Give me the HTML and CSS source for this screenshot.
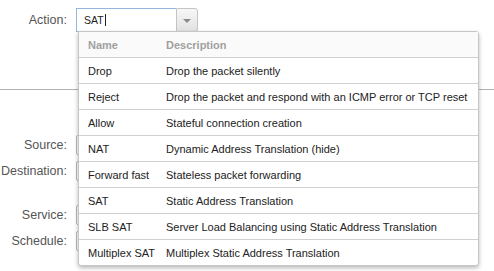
FILE: index.html
```html
<!DOCTYPE html>
<html>
<head>
<meta charset="utf-8" />
<title>Rule action</title>
<link rel="stylesheet" href="styles.css">
</head>
<body>
<div class="top">
    <div class="row">
        <label class="lbl">Action:</label>
        <div class="combo">
            <div class="combo-input">SAT<span class="caret"></span></div>
            <div class="combo-btn"><span class="arrow"></span></div>

            <!-- action list -->
            <div class="list">
                <div class="item head"><span>Name</span><span>Description</span></div>
                <div class="item"><span>Drop</span><span>Drop the packet silently</span></div>
                <div class="item"><span>Reject</span><span>Drop the packet and respond with an ICMP error or TCP reset</span></div>
                <div class="item"><span>Allow</span><span>Stateful connection creation</span></div>
                <div class="item"><span>NAT</span><span>Dynamic Address Translation (hide)</span></div>
                <div class="item"><span>Forward fast</span><span>Stateless packet forwarding</span></div>
                <div class="item"><span>SAT</span><span>Static Address Translation</span></div>
                <div class="item"><span>SLB SAT</span><span>Server Load Balancing using Static Address Translation</span></div>
                <div class="item"><span>Multiplex SAT</span><span>Multiplex Static Address Translation</span></div>
            </div>
        </div>
    </div>
</div>

<div class="sep"></div>

<div class="fields">
    <div class="row"><label class="lbl">Source:</label><div class="field"></div></div>
    <div class="row"><label class="lbl">Destination:</label><div class="field"></div></div>
    <div class="row gap"><label class="lbl">Service:</label><div class="field"></div></div>
    <div class="row"><label class="lbl">Schedule:</label><div class="field"></div></div>
</div>

<svg class="pointer" width="14" height="22" viewBox="0 0 14 22">
    <path d="M1 1 L1 17 L5 13 L8 20 L10.5 19 L7.5 12 L13 12 Z" fill="#fff" stroke="#000" stroke-width="1" stroke-linejoin="miter"/>
</svg>
</body>
</html>
```
FILE: styles.css
```css
html,body{margin:0; padding:0; height:271px;}
body{position:relative; background:#fff; font-family:"Liberation Sans", Arial, sans-serif; color:#222; overflow:hidden;}

.top{padding-top:8px;}
.row{display:flex; align-items:center; height:24px;}
.lbl{width:67px; flex-shrink:0; display:flex; justify-content:flex-end; margin-right:9px; white-space:nowrap; font-size:12.5px; color:#555;}

/*combo box*/
.combo{position:relative; display:flex; height:24px;}
.combo-input{width:92px; height:22px; border:1px solid #94b8e0; border-right:none; padding-left:7px; font-size:10.5px; line-height:22px; color:#222; background:#fff;}
.caret{display:inline-block; width:1px; height:12px; background:#222; vertical-align:-2px; margin-left:1px;}
.combo-btn{width:20px; height:22px; border:1px solid #c4c4c4; border-radius:0 3px 3px 0; background:linear-gradient(#f7f7f7,#e2e2e2); display:flex; align-items:center; justify-content:center;}
.arrow{width:0; height:0; border-left:4px solid transparent; border-right:4px solid transparent; border-top:4px solid #8a8a8a; margin-top:1px;}

.list{position:absolute; left:2px; top:23px; width:399px; background:#fff; border:1px solid #c6c6c6; border-radius:0 3px 3px 3px; box-shadow:0 2px 4px rgba(0,0,0,.28); z-index:5;}
.item{display:grid; grid-template-columns:78px 1fr; height:25px; line-height:27px; padding:0 9px; border-top:1px solid #d0d0d0; font-size:11px; white-space:nowrap;}
.item.head{border-top:none; background:#fafafa; color:#a0a0a0; font-weight:bold;}

.sep{height:1px; background:#b0b0b0; margin-top:57px;}

/*form fields behind the list*/
.fields{padding-top:45px;}
.fields .row{height:20px; margin-bottom:6px;}
.fields .row.gap{margin-top:24px;}
.field{width:200px; height:18px; border:1px solid #b8b8b8; border-radius:2px;}

.pointer{position:absolute; left:421px; top:41px;}
```
